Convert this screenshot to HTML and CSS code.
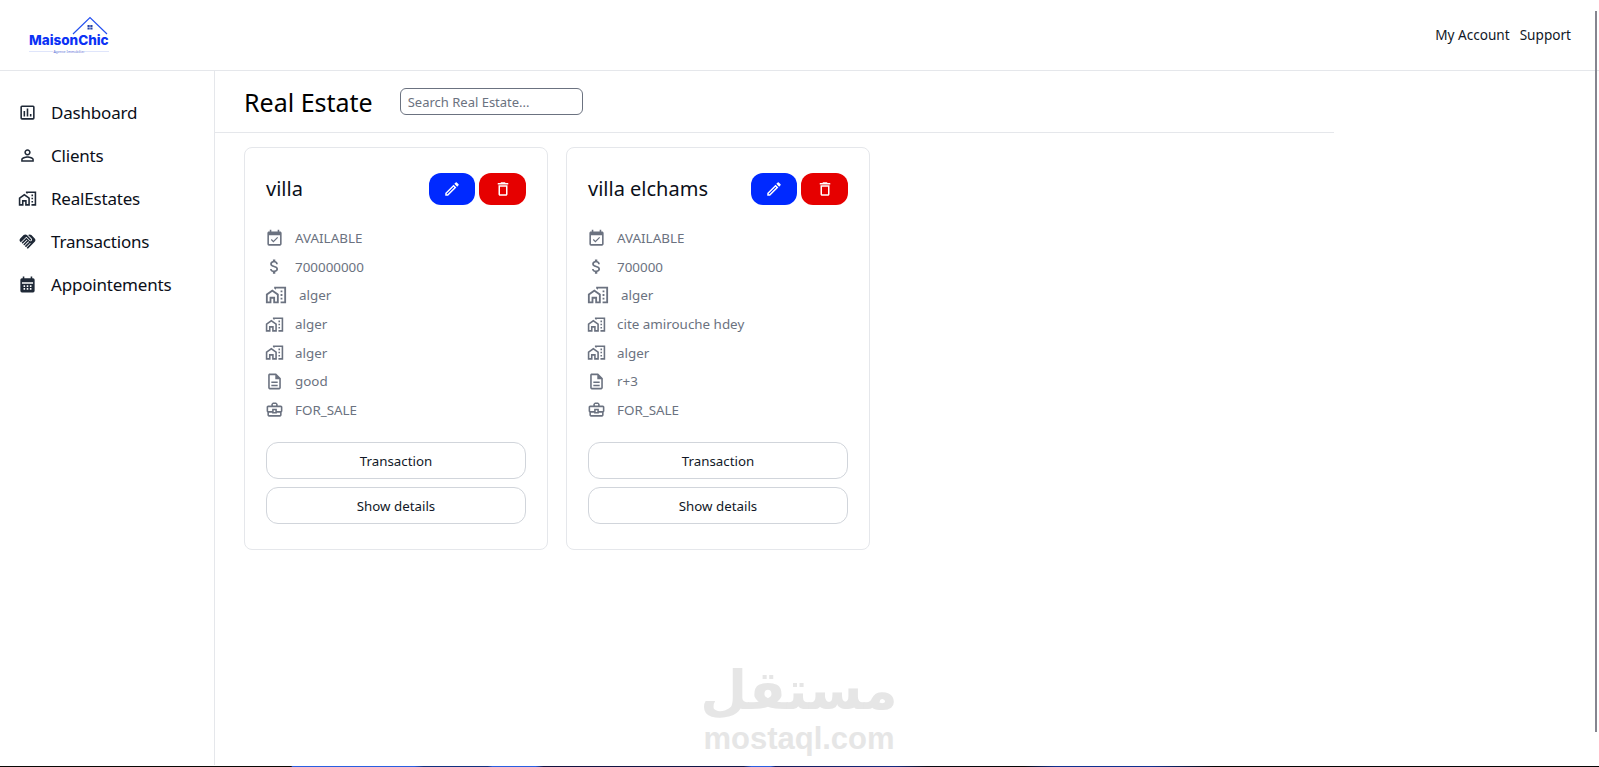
FILE: index.html
```html
<!DOCTYPE html>
<html lang="en">
<head>
    <meta charset="UTF-8">
    <meta name="viewport" content="width=device-width, initial-scale=1.0">
    <title>MaisonChic - Real Estate</title>
    <link rel="stylesheet" href="styles.css">
</head>
<body>
    <svg class="sprite" xmlns="http://www.w3.org/2000/svg">
        <symbol id="i-analytics" viewBox="0 0 24 24"><path d="M19 3H5a2 2 0 0 0-2 2v14a2 2 0 0 0 2 2h14a2 2 0 0 0 2-2V5a2 2 0 0 0-2-2zm0 16H5V5h14v14zM7 10h2v7H7zm4-3h2v10h-2zm4 7h2v3h-2z"/></symbol>
        <symbol id="i-person" viewBox="0 0 24 24"><path d="M12 5.900a2.100 2.100 0 1 1 0 4.200 2.100 2.100 0 0 1 0-4.200m0 9c2.970 0 6.100 1.460 6.100 2.100v1.100H5.900V17c0-.64 3.130-2.100 6.100-2.100M12 4C9.790 4 8 5.790 8 8s1.790 4 4 4 4-1.790 4-4-1.790-4-4-4zm0 9c-2.670 0-8 1.340-8 4v3h16v-3c0-2.660-5.330-4-8-4z"/></symbol>
        <symbol id="i-home" viewBox="0 0 24 24"><path d="M1 11v10h6v-5h2v5h6V11L8 6l-7 5zm12 8h-2v-5H5v5H3v-7l5-3.500 5 3.500v7zM17 7h2v2h-2zm0 4h2v2h-2zm0 4h2v2h-2zM10 3v1.970l2 1.430V5h9v14h-4v2h6V3z"/></symbol>
        <symbol id="i-handshake" viewBox="0 0 24 24"><path d="M16.480 10.410c-.39.39-1.040.39-1.430 0l-4.470-4.460-7.050 7.040-.66-.63c-1.170-1.170-1.170-3.070 0-4.240l4.240-4.240c1.170-1.170 3.070-1.170 4.240 0L16.480 9c.39.39.39 1.020 0 1.410zm.7-2.120c.78.78.78 2.050 0 2.830-1.270 1.270-2.610.22-2.830 0l-3.760-3.760-5.570 5.570c-.39.39-.39 1.020 0 1.410.39.39 1.020.39 1.420 0l4.620-4.620.71.71-4.620 4.620c-.39.39-.39 1.020 0 1.410.39.39 1.020.39 1.420 0l4.620-4.620.71.71-4.620 4.620c-.39.39-.39 1.020 0 1.410.39.39 1.020.39 1.410 0l4.620-4.620.71.71-4.620 4.620c-.39.39-.39 1.020 0 1.410.39.39 1.020.39 1.410 0l8.320-8.340c1.170-1.170 1.170-3.070 0-4.240l-4.240-4.240c-1.150-1.150-3.010-1.170-4.180-.06l4.470 4.470z"/></symbol>
        <symbol id="i-calendar" viewBox="0 0 24 24"><path fill-rule="evenodd" d="M19 4h-1V2h-2v2H8V2H6v2H5a2 2 0 0 0-2 2v14a2 2 0 0 0 2 2h14a2 2 0 0 0 2-2V6a2 2 0 0 0-2-2zM5 9h14v2H5zm2 4h2v2H7zm4 0h2v2h-2zm4 0h2v2h-2zm-8 3.500h2v2H7zm4 0h2v2h-2zm4 0h2v2h-2z"/></symbol>
        <symbol id="i-event" viewBox="0 0 24 24"><path d="M16.530 11.060 15.470 10l-4.880 4.880-2.120-2.120-1.060 1.060L10.590 17l5.940-5.940zM19 3h-1V1h-2v2H8V1H6v2H5c-1.110 0-1.990.9-1.990 2L3 19a2 2 0 0 0 2 2h14c1.100 0 2-.9 2-2V5c0-1.100-.9-2-2-2zm0 16H5V8h14v11z"/></symbol>
        <symbol id="i-money" viewBox="0 0 24 24"><path d="M11.800 10.900c-2.270-.59-3-1.200-3-2.150 0-1.090 1.010-1.850 2.700-1.850 1.780 0 2.440.85 2.500 2.100h2.210c-.07-1.720-1.120-3.300-3.210-3.810V3h-3v2.160c-1.940.42-3.500 1.680-3.500 3.610 0 2.310 1.910 3.460 4.700 4.130 2.500.6 3 1.480 3 2.410 0 .69-.49 1.790-2.700 1.790-2.060 0-2.870-.92-2.980-2.100h-2.200c.12 2.190 1.760 3.420 3.680 3.830V21h3v-2.150c1.950-.37 3.500-1.500 3.500-3.550 0-2.840-2.430-3.810-4.700-4.400z"/></symbol>
        <symbol id="i-doc" viewBox="0 0 24 24"><path d="M8 16h8v2H8zm0-4h8v2H8zm6-10H6c-1.100 0-2 .9-2 2v16c0 1.100.89 2 1.990 2H18c1.100 0 2-.9 2-2V8l-6-6zm4 18H6V4h7v5h5v11z"/></symbol>
        <symbol id="i-bag" viewBox="0 0 24 24"><path d="M20 7h-4V5l-2-2h-4L8 5v2H4c-1.100 0-2 .9-2 2v5c0 .75.4 1.380 1 1.730V19c0 1.110.89 2 2 2h14c1.110 0 2-.89 2-2v-3.280c.59-.35 1-.99 1-1.720V9c0-1.100-.9-2-2-2zM10 5h4v2h-4V5zM4 9h16v5h-5v-3H9v3H4V9zm9 6h-2v-2h2v2zm6 4H5v-3h4v1h6v-1h4v3z"/></symbol>
        <symbol id="i-edit" viewBox="0 0 24 24"><path d="M3 17.250V21h3.750L17.810 9.940l-3.750-3.750L3 17.250zM5.920 19H5v-.92l9.060-9.060.92.92L5.920 19zM20.710 7.040a1 1 0 0 0 0-1.410l-2.340-2.340a1 1 0 0 0-1.410 0l-1.830 1.830 3.750 3.750 1.830-1.830z"/></symbol>
        <symbol id="i-delete" viewBox="0 0 24 24"><path d="M6 19c0 1.100.9 2 2 2h8c1.100 0 2-.9 2-2V7H6v12zM8 9h8v10H8V9zm7.500-5-1-1h-5l-1 1H5v2h14V4z"/></symbol>
    </svg>

    <div class="page">
        <header class="topbar">
            <a class="logo" href="#">
                <svg class="logo-roof" viewBox="0 0 36 19"><path d="M1 18 18 1.500 35 18" fill="none" stroke="#2450f0" stroke-width="1.200"/><path d="M15.500 9h2.200v2h-2.200zm2.800 0h2.200v2h-2.200zm-2.800 2.600h2.200v2h-2.200zm2.800 0h2.200v2h-2.200z" fill="#2a45a8"/></svg>
                <span class="logo-name">MaisonChic</span>
                <span class="logo-sub">Agence Immobilier</span>
            </a>
            <nav class="top-links">
                <a href="#">My Account</a>
                <a href="#">Support</a>
            </nav>
        </header>

        <div class="layout">
            <aside class="sidebar">
                <a class="side-link" href="#"><svg class="side-icon"><use href="#i-analytics"/></svg>Dashboard</a>
                <a class="side-link" href="#"><svg class="side-icon"><use href="#i-person"/></svg>Clients</a>
                <a class="side-link" href="#"><svg class="side-icon"><use href="#i-home"/></svg>RealEstates</a>
                <a class="side-link" href="#"><svg class="side-icon"><use href="#i-handshake"/></svg>Transactions</a>
                <a class="side-link" href="#"><svg class="side-icon"><use href="#i-calendar"/></svg>Appointements</a>
            </aside>

            <main class="content">
                <div class="content-head">
                    <h1>Real Estate</h1>
                    <input class="search" type="text" placeholder="Search Real Estate...">
                </div>

                <div class="cards">
                    <article class="card">
                        <div class="card-head">
                            <h2>villa</h2>
                            <div class="card-actions">
                                <button class="icon-btn edit"><svg><use href="#i-edit"/></svg></button>
                                <button class="icon-btn delete"><svg><use href="#i-delete"/></svg></button>
                            </div>
                        </div>
                        <ul class="facts">
                            <li><svg><use href="#i-event"/></svg>AVAILABLE</li>
                            <li><svg><use href="#i-money"/></svg>700000000</li>
                            <li class="big"><svg><use href="#i-home"/></svg>alger</li>
                            <li><svg><use href="#i-home"/></svg>alger</li>
                            <li><svg><use href="#i-home"/></svg>alger</li>
                            <li><svg><use href="#i-doc"/></svg>good</li>
                            <li><svg><use href="#i-bag"/></svg>FOR_SALE</li>
                        </ul>
                        <div class="card-buttons">
                            <button class="wide-btn">Transaction</button>
                            <button class="wide-btn">Show details</button>
                        </div>
                    </article>

                    <article class="card">
                        <div class="card-head">
                            <h2>villa elchams</h2>
                            <div class="card-actions">
                                <button class="icon-btn edit"><svg><use href="#i-edit"/></svg></button>
                                <button class="icon-btn delete"><svg><use href="#i-delete"/></svg></button>
                            </div>
                        </div>
                        <ul class="facts">
                            <li><svg><use href="#i-event"/></svg>AVAILABLE</li>
                            <li><svg><use href="#i-money"/></svg>700000</li>
                            <li class="big"><svg><use href="#i-home"/></svg>alger</li>
                            <li><svg><use href="#i-home"/></svg>cite amirouche hdey</li>
                            <li><svg><use href="#i-home"/></svg>alger</li>
                            <li><svg><use href="#i-doc"/></svg>r+3</li>
                            <li><svg><use href="#i-bag"/></svg>FOR_SALE</li>
                        </ul>
                        <div class="card-buttons">
                            <button class="wide-btn">Transaction</button>
                            <button class="wide-btn">Show details</button>
                        </div>
                    </article>
                </div>
            </main>
        </div>

        <div class="taskbar-edge"></div>
    </div>

    <div class="scroll-thumb"></div>
    <div class="watermark">
        <span class="watermark-ar" lang="ar" dir="rtl">مستقل</span>
        <span class="watermark-en">mostaql.com</span>
    </div>
</body>
</html>
```

FILE: styles.css
```css
* {
    box-sizing: border-box;
}
html,
body {
    margin: 0;
    height: 100%;
    overflow: hidden;
}
body {
    font-family: "Noto Sans", "Open Sans", Arial, sans-serif;
    background-color: white;
    color: #000;
}
a {
    color: inherit;
    text-decoration: none;
}
.sprite {
    display: none;
}
.page {
    display: flex;
    flex-direction: column;
    height: 767px;
}

/* top bar */
.topbar {
    display: flex;
    justify-content: space-between;
    align-items: flex-start;
    height: 71px;
    flex-shrink: 0;
    padding-left: 29px;
    padding-right: 28px;
    border-bottom: 1px solid #e5e7eb;
}
.logo {
    display: flex;
    flex-direction: column;
    width: 80px;
    margin-top: 16px;
}
.logo-roof {
    width: 36px;
    height: 19px;
    margin-left: 43px;
    display: block;
}
.logo-name {
    margin-top: -1px;
    font-family: "Inter", sans-serif;
    font-weight: 800;
    font-size: 13.500px;
    line-height: 13px;
    color: #0b32f5;
    white-space: nowrap;
}
.logo-sub {
    margin-top: 2px;
    padding-bottom: 1px;
    font-size: 3.500px;
    line-height: 5px;
    text-align: center;
    color: #5c72d8;
    white-space: nowrap;
    background: linear-gradient(#dfe5fb, #dfe5fb) left 2px / 24px 1px no-repeat,
        linear-gradient(#dfe5fb, #dfe5fb) right 2px / 24px 1px no-repeat;
}
.top-links {
    display: flex;
    gap: 10px;
    margin-top: 25px;
    font-size: 13.600px;
    line-height: 20px;
    color: #111827;
}

/* sidebar + content */
.layout {
    display: flex;
    flex: 1;
    min-height: 0;
}
.sidebar {
    width: 215px;
    flex-shrink: 0;
    padding-top: 20px;
    border-right: 1px solid #e5e7eb;
}
.side-link {
    display: flex;
    align-items: center;
    height: 43px;
    padding-left: 18px;
    font-size: 17px;
    letter-spacing: -0.2px;
    color: #0b0f19;
}
.side-icon {
    width: 19px;
    height: 19px;
    margin-right: 14px;
    fill: #1f2937;
}
.content {
    width: 1119px;
}
.content-head {
    display: flex;
    align-items: center;
    height: 62px;
    padding-left: 29px;
    border-bottom: 1px solid #e5e7eb;
}
.content-head h1 {
    margin: 0 27px 0 0;
    font-size: 25px;
    font-weight: 400;
}
.search {
    width: 183px;
    height: 27px;
    padding: 0 7px;
    border: 1px solid #6b7280;
    border-radius: 6px;
    font-family: inherit;
    font-size: 13px;
}
.search::placeholder {
    color: #6b7280;
}

/* cards */
.cards {
    display: flex;
    gap: 18px;
    padding: 14px 0 0 29px;
}
.card {
    width: 304px;
    height: 403px;
    padding: 24px 21px;
    background-color: white;
    border: 1px solid #e5e7eb;
    border-radius: 8px;
}
.card-head {
    display: flex;
    justify-content: space-between;
    align-items: flex-end;
    height: 33px;
}
.card-head h2 {
    margin: 0 0 3px;
    font-size: 20px;
    font-weight: 400;
    color: #0b0f19;
}
.card-actions {
    display: flex;
    gap: 4px;
}
.icon-btn {
    display: flex;
    align-items: center;
    justify-content: center;
    width: 46px;
    height: 32px;
    padding: 0;
    border: none;
    border-radius: 12px;
    cursor: pointer;
}
.icon-btn svg {
    width: 18px;
    height: 18px;
    fill: white;
}
.edit {
    background-color: #0029ff;
}
.delete {
    width: 47px;
    background-color: #e60000;
}
.facts {
    margin: 19px 0 18px;
    padding: 0;
    list-style: none;
}
.facts li {
    display: flex;
    align-items: center;
    height: 28.600px;
    font-size: 13.400px;
    color: #6b7280;
}
.facts svg {
    width: 19px;
    height: 19px;
    margin-left: -1px;
    margin-right: 11px;
    fill: #6b7280;
}
.facts .big svg {
    width: 22px;
    height: 22px;
    margin-left: -1px;
    margin-right: 12px;
}
.card-buttons {
    display: flex;
    flex-direction: column;
    gap: 8px;
}
.wide-btn {
    height: 37px;
    background-color: white;
    border: 1px solid #d1d5db;
    border-radius: 12px;
    font-family: inherit;
    font-size: 13.300px;
    color: #111827;
    cursor: pointer;
}

/* things lying over the page */
.taskbar-edge {
    height: 1px;
    margin-top: 1px;
    flex-shrink: 0;
    background: linear-gradient(90deg, #0a0806 18.200%, #2a5fe0 18.300%, #2a5fe0 25.900%, #123080 26.500%, #123080 30.500%, #2a5fe0 30.800%, #2a5fe0 33.500%, #14123f 34%, #10184a 46.500%, #2a5fe0 47%, #2a5fe0 48.200%, #141a5a 48.500%, #142a80 56%, #0a0a14 58%, #050505 64%, #103090 66%, #103090 72%, #050505 76%);
}
.scroll-thumb {
    position: absolute;
    top: 11px;
    left: 1595px;
    width: 2px;
    height: 721px;
    background-color: #85858f;
}
.watermark {
    position: absolute;
    left: 703px;
    top: 656px;
    width: 192px;
    display: flex;
    flex-direction: column;
    align-items: center;
    color: #e6e6e6;
    font-weight: 700;
    pointer-events: none;
}
.watermark-ar {
    font-family: "DejaVu Sans", sans-serif;
    font-size: 54px;
    line-height: 70px;
}
.watermark-en {
    font-family: "Liberation Sans", sans-serif;
    font-size: 31px;
    line-height: 26px;
}
```
